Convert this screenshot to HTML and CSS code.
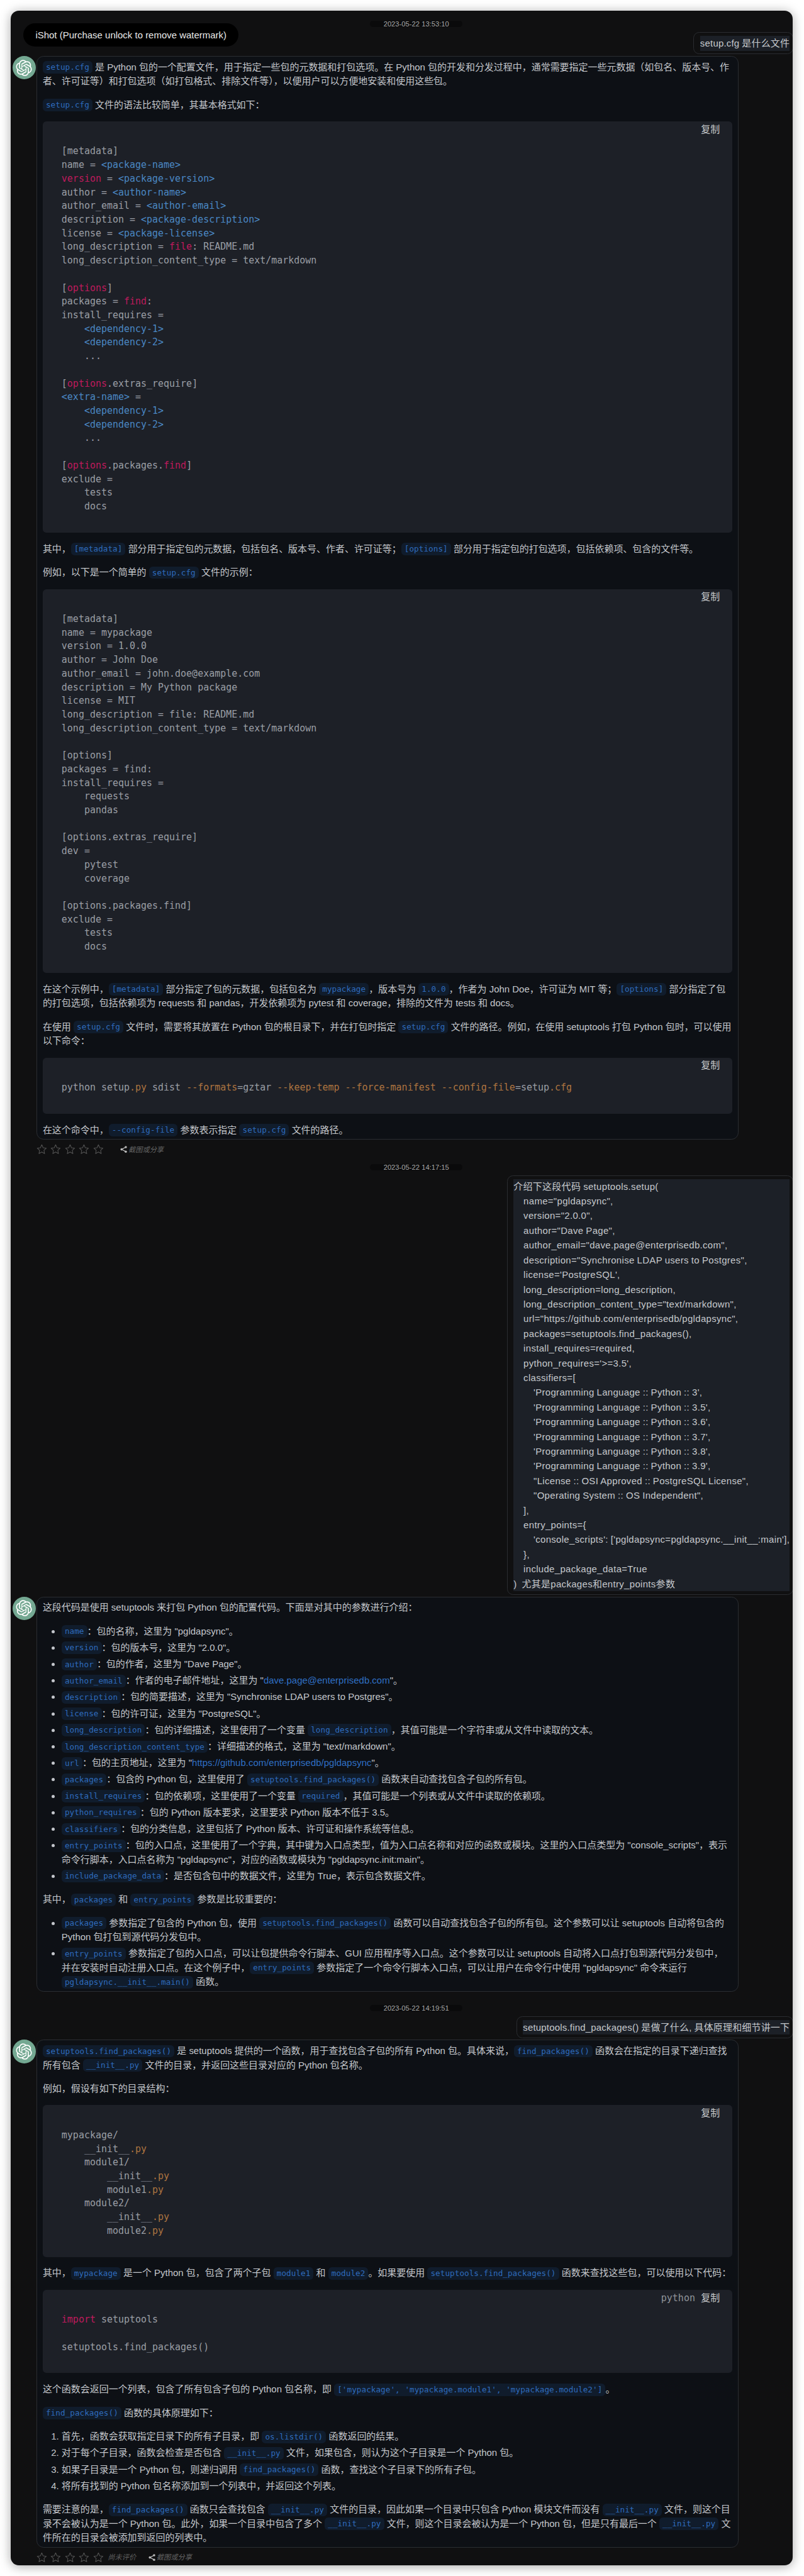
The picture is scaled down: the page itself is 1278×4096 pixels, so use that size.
FILE: index.html
```html
<!DOCTYPE html>
<html lang="zh-CN">
<head>
  <meta charset="UTF-8" />
  <title>ChatGPT conversation</title>
  <link rel="stylesheet" href="styles.css">
</head>
<body>
  <svg class="defs" width="0" height="0" aria-hidden="true">
    <symbol id="logo" viewBox="0 0 41 41">
      <path fill="currentColor" d="M37.5324 16.8707C37.9808 15.5241 38.1363 14.0974 37.9886 12.6859C37.8409 11.2744 37.3934 9.91076 36.676 8.68622C35.6126 6.83404 33.9882 5.3676 32.0373 4.4985C30.0864 3.62941 27.9098 3.40259 25.8215 3.85078C24.8796 2.7893 23.7219 1.94125 22.4257 1.36341C21.1295 0.785575 19.7249 0.491269 18.3058 0.500197C16.1708 0.495044 14.0893 1.16803 12.3614 2.42214C10.6335 3.67624 9.34853 5.44666 8.6917 7.47815C7.30085 7.76286 5.98686 8.3414 4.8377 9.17505C3.68854 10.0087 2.73073 11.0782 2.02839 12.312C0.956464 14.1591 0.498905 16.2988 0.721698 18.4228C0.944492 20.5467 1.83612 22.5449 3.268 24.1293C2.81966 25.4759 2.66413 26.9026 2.81182 28.3141C2.95951 29.7256 3.40701 31.0892 4.12437 32.3138C5.18791 34.1659 6.8123 35.6322 8.76321 36.5013C10.7141 37.3704 12.8907 37.5973 14.9789 37.1492C15.9208 38.2107 17.0786 39.0587 18.3747 39.6366C19.6709 40.2144 21.0755 40.5087 22.4946 40.4998C24.6307 40.5054 26.7133 39.8321 28.4418 38.5772C30.1704 37.3223 31.4556 35.5506 32.1119 33.5179C33.5027 33.2332 34.8167 32.6547 35.9659 31.821C37.115 30.9874 38.0728 29.9178 38.7752 28.684C39.8458 26.8371 40.3023 24.6979 40.0789 22.5748C39.8556 20.4517 38.9639 18.4544 37.5324 16.8707ZM22.4978 37.8849C20.7443 37.8874 19.0459 37.2733 17.6994 36.1501C17.7601 36.117 17.8666 36.0586 17.936 36.0161L25.9004 31.4156C26.1003 31.3019 26.2663 31.137 26.3813 30.9378C26.4964 30.7386 26.5563 30.5124 26.5549 30.2825V19.0542L29.9213 20.998C29.9389 21.0068 29.9541 21.0198 29.9656 21.0359C29.977 21.052 29.9842 21.0707 29.9867 21.0902V30.3889C29.9842 32.375 29.1946 34.2791 27.7909 35.6841C26.3872 37.0892 24.4838 37.8806 22.4978 37.8849ZM6.39227 31.0064C5.51397 29.4888 5.19742 27.7107 5.49804 25.9832C5.55718 26.0187 5.66048 26.0818 5.73461 26.1244L13.699 30.7248C13.8975 30.8408 14.1233 30.902 14.3532 30.902C14.583 30.902 14.8088 30.8408 15.0073 30.7248L24.731 25.1103V28.9979C24.7321 29.0177 24.7283 29.0376 24.7199 29.0556C24.7115 29.0736 24.6988 29.0893 24.6829 29.1012L16.6317 33.7497C14.9096 34.7416 12.8643 35.0097 10.9447 34.4954C9.02506 33.9811 7.38785 32.7263 6.39227 31.0064ZM4.29707 13.6194C5.17156 12.0998 6.55279 10.9364 8.19885 10.3327C8.19885 10.4013 8.19491 10.5228 8.19491 10.6071V19.808C8.19351 20.0378 8.25334 20.2638 8.36823 20.4629C8.48312 20.6619 8.64893 20.8267 8.84863 20.9404L18.5723 26.5542L15.206 28.4979C15.1894 28.5089 15.1703 28.5155 15.1505 28.5173C15.1307 28.5191 15.1107 28.516 15.0924 28.5082L7.04046 23.8557C5.32135 22.8601 4.06716 21.2235 3.55289 19.3046C3.03862 17.3858 3.30624 15.3413 4.29707 13.6194ZM31.955 20.0556L22.2312 14.4411L25.5976 12.4981C25.6142 12.4872 25.6333 12.4805 25.6531 12.4787C25.6729 12.4769 25.6928 12.4801 25.7111 12.4879L33.7631 17.1364C34.9967 17.849 36.0017 18.8982 36.6606 20.1613C37.3194 21.4244 37.6047 22.849 37.4832 24.2684C37.3617 25.6878 36.8382 27.0432 35.9743 28.1759C35.1103 29.3086 33.9415 30.1717 32.6047 30.6641C32.6047 30.5947 32.6047 30.4733 32.6047 30.3889V21.188C32.6066 20.9586 32.5474 20.7328 32.4332 20.5338C32.319 20.3348 32.154 20.1698 31.955 20.0556ZM35.3055 15.0128C35.2464 14.9765 35.1431 14.9142 35.069 14.8717L27.1045 10.2712C26.906 10.1554 26.6803 10.0943 26.4504 10.0943C26.2206 10.0943 25.9948 10.1554 25.7963 10.2712L16.0726 15.8858V11.9982C16.0715 11.9783 16.0753 11.9585 16.0837 11.9405C16.0921 11.9225 16.1048 11.9068 16.1207 11.8949L24.1719 7.25025C25.4053 6.53903 26.8158 6.19376 28.2383 6.25482C29.6608 6.31589 31.0364 6.78077 32.2044 7.59508C33.3723 8.40939 34.2842 9.53945 34.8334 10.8531C35.3826 12.1667 35.5464 13.6095 35.3055 15.0128ZM14.2424 21.9419L10.8752 19.9981C10.8576 19.9893 10.8423 19.9763 10.8309 19.9602C10.8195 19.9441 10.8122 19.9254 10.8098 19.9058V10.6071C10.8107 9.18295 11.2173 7.78848 11.9819 6.58696C12.7466 5.38544 13.8377 4.42659 15.1275 3.82264C16.4173 3.21869 17.8524 2.99464 19.2649 3.1767C20.6775 3.35876 22.0089 3.93941 23.1034 4.85067C23.0427 4.88379 22.937 4.94215 22.8668 4.98473L14.9024 9.58517C14.7025 9.69878 14.5366 9.86356 14.4215 10.0626C14.3065 10.2616 14.2466 10.4877 14.2479 10.7175L14.2424 21.9419ZM16.071 17.9991L20.4018 15.4978L24.7325 17.9975V22.9985L20.4018 25.4983L16.071 22.9985V17.9991Z"/>
    </symbol>
    <symbol id="star" viewBox="0 0 18 18">
      <path fill="none" stroke="currentColor" stroke-width="1.1" stroke-linejoin="round" d="M9 1.4l2.3 5.1 5.4.6-4 3.7 1.1 5.5L9 13.6l-4.8 2.7 1.1-5.5-4-3.7 5.4-.6z"/>
    </symbol>
    <symbol id="share" viewBox="0 0 12 12">
      <path fill="none" stroke="currentColor" stroke-width="1.3" d="M9.6 2.2L2.4 6l7.2 3.8"/>
      <circle cx="9.6" cy="2.2" r="1.9" fill="currentColor"/>
      <circle cx="2.4" cy="6" r="1.9" fill="currentColor"/>
      <circle cx="9.6" cy="9.8" r="1.9" fill="currentColor"/>
    </symbol>
  </svg>

  <div class="window">
    <div class="watermark">iShot (Purchase unlock to remove watermark)</div>

    <div class="time"><span>2023-05-22 13:53:10</span></div>
    <div class="user"><div class="user-box"><div class="user-text">setup.cfg 是什么文件</div></div></div>

    <div class="answer">
      <div class="avatar"><svg><use href="#logo"/></svg></div>
      <div class="bubble">
        <p><code>setup.cfg</code> 是 Python 包的一个配置文件，用于指定一些包的元数据和打包选项。在 Python 包的开发和分发过程中，通常需要指定一些元数据（如包名、版本号、作者、许可证等）和打包选项（如打包格式、排除文件等），以便用户可以方便地安装和使用这些包。</p>
        <p><code>setup.cfg</code> 文件的语法比较简单，其基本格式如下：</p>
        <div class="code">
          <div class="code-head"><span class="copy">复制</span></div>
<pre>[metadata]
name = <b>&lt;package-name&gt;</b>
<i>version</i> = <b>&lt;package-version&gt;</b>
author = <b>&lt;author-name&gt;</b>
author_email = <b>&lt;author-email&gt;</b>
description = <b>&lt;package-description&gt;</b>
license = <b>&lt;package-license&gt;</b>
long_description = <i>file</i>: README.md
long_description_content_type = text/markdown

[<i>options</i>]
packages = <i>find</i>:
install_requires =
    <b>&lt;dependency-1&gt;</b>
    <b>&lt;dependency-2&gt;</b>
    ...

[<i>options</i>.extras_require]
<b>&lt;extra-name&gt;</b> =
    <b>&lt;dependency-1&gt;</b>
    <b>&lt;dependency-2&gt;</b>
    ...

[<i>options</i>.packages.<i>find</i>]
exclude =
    tests
    docs</pre>
        </div>
        <p>其中，<code>[metadata]</code> 部分用于指定包的元数据，包括包名、版本号、作者、许可证等；<code>[options]</code> 部分用于指定包的打包选项，包括依赖项、包含的文件等。</p>
        <p>例如，以下是一个简单的 <code>setup.cfg</code> 文件的示例：</p>
        <div class="code">
          <div class="code-head"><span class="copy">复制</span></div>
<pre>[metadata]
name = mypackage
version = 1.0.0
author = John Doe
author_email = john.doe@example.com
description = My Python package
license = MIT
long_description = file: README.md
long_description_content_type = text/markdown

[options]
packages = find:
install_requires =
    requests
    pandas

[options.extras_require]
dev =
    pytest
    coverage

[options.packages.find]
exclude =
    tests
    docs</pre>
        </div>
        <p>在这个示例中，<code>[metadata]</code> 部分指定了包的元数据，包括包名为 <code>mypackage</code>，版本号为 <code>1.0.0</code>，作者为 John Doe，许可证为 MIT 等；<code>[options]</code> 部分指定了包的打包选项，包括依赖项为 requests 和 pandas，开发依赖项为 pytest 和 coverage，排除的文件为 tests 和 docs。</p>
        <p>在使用 <code>setup.cfg</code> 文件时，需要将其放置在 Python 包的根目录下，并在打包时指定 <code>setup.cfg</code> 文件的路径。例如，在使用 setuptools 打包 Python 包时，可以使用以下命令：</p>
        <div class="code">
          <div class="code-head"><span class="copy">复制</span></div>
<pre>python setup<u>.py</u> sdist <u>--formats</u>=gztar <u>--keep-temp</u> <u>--force-manifest</u> <u>--config-file</u>=setup<u>.cfg</u></pre>
        </div>
        <p>在这个命令中，<code>--config-file</code> 参数表示指定 <code>setup.cfg</code> 文件的路径。</p>
      </div>
    </div>
    <div class="actions">
      <div class="stars">
        <svg><use href="#star"/></svg>
        <svg><use href="#star"/></svg>
        <svg><use href="#star"/></svg>
        <svg><use href="#star"/></svg>
        <svg><use href="#star"/></svg>
      </div>
      <span class="rating"></span>
      <span class="share"><svg><use href="#share"/></svg>截图或分享</span>
    </div>

    <div class="time"><span>2023-05-22 14:17:15</span></div>
    <div class="user"><div class="user-box"><div class="user-text user-long">介绍下这段代码 setuptools.setup(
    name="pgldapsync",
    version="2.0.0",
    author="Dave Page",
    author_email="dave.page@enterprisedb.com",
    description="Synchronise LDAP users to Postgres",
    license='PostgreSQL',
    long_description=long_description,
    long_description_content_type="text/markdown",
    url="https://github.com/enterprisedb/pgldapsync",
    packages=setuptools.find_packages(),
    install_requires=required,
    python_requires='&gt;=3.5',
    classifiers=[
        'Programming Language :: Python :: 3',
        'Programming Language :: Python :: 3.5',
        'Programming Language :: Python :: 3.6',
        'Programming Language :: Python :: 3.7',
        'Programming Language :: Python :: 3.8',
        'Programming Language :: Python :: 3.9',
        "License :: OSI Approved :: PostgreSQL License",
        "Operating System :: OS Independent",
    ],
    entry_points={
        'console_scripts': ['pgldapsync=pgldapsync.__init__:main'],
    },
    include_package_data=True
)  尤其是packages和entry_points参数</div></div></div>

    <div class="answer answer-plain">
      <div class="avatar"><svg><use href="#logo"/></svg></div>
      <div class="bubble">
        <p>这段代码是使用 setuptools 来打包 Python 包的配置代码。下面是对其中的参数进行介绍：</p>
        <ul>
          <li><code>name</code>：包的名称，这里为 "pgldapsync"。</li>
          <li><code>version</code>：包的版本号，这里为 "2.0.0"。</li>
          <li><code>author</code>：包的作者，这里为 "Dave Page"。</li>
          <li><code>author_email</code>：作者的电子邮件地址，这里为 "<a href="#">dave.page@enterprisedb.com</a>"。</li>
          <li><code>description</code>：包的简要描述，这里为 "Synchronise LDAP users to Postgres"。</li>
          <li><code>license</code>：包的许可证，这里为 "PostgreSQL"。</li>
          <li><code>long_description</code>：包的详细描述，这里使用了一个变量 <code>long_description</code>，其值可能是一个字符串或从文件中读取的文本。</li>
          <li><code>long_description_content_type</code>：详细描述的格式，这里为 "text/markdown"。</li>
          <li><code>url</code>：包的主页地址，这里为 "<a href="#">https://github.com/enterprisedb/pgldapsync</a>"。</li>
          <li><code>packages</code>：包含的 Python 包，这里使用了 <code>setuptools.find_packages()</code> 函数来自动查找包含子包的所有包。</li>
          <li><code>install_requires</code>：包的依赖项，这里使用了一个变量 <code>required</code>，其值可能是一个列表或从文件中读取的依赖项。</li>
          <li><code>python_requires</code>：包的 Python 版本要求，这里要求 Python 版本不低于 3.5。</li>
          <li><code>classifiers</code>：包的分类信息，这里包括了 Python 版本、许可证和操作系统等信息。</li>
          <li><code>entry_points</code>：包的入口点，这里使用了一个字典，其中键为入口点类型，值为入口点名称和对应的函数或模块。这里的入口点类型为 "console_scripts"，表示命令行脚本，入口点名称为 "pgldapsync"，对应的函数或模块为 "pgldapsync.init:main"。</li>
          <li><code>include_package_data</code>：是否包含包中的数据文件，这里为 True，表示包含数据文件。</li>
        </ul>
        <p>其中，<code>packages</code> 和 <code>entry_points</code> 参数是比较重要的：</p>
        <ul>
          <li><code>packages</code> 参数指定了包含的 Python 包，使用 <code>setuptools.find_packages()</code> 函数可以自动查找包含子包的所有包。这个参数可以让 setuptools 自动将包含的 Python 包打包到源代码分发包中。</li>
          <li><code>entry_points</code> 参数指定了包的入口点，可以让包提供命令行脚本、GUI 应用程序等入口点。这个参数可以让 setuptools 自动将入口点打包到源代码分发包中，并在安装时自动注册入口点。在这个例子中，<code>entry_points</code> 参数指定了一个命令行脚本入口点，可以让用户在命令行中使用 "pgldapsync" 命令来运行 <code>pgldapsync.__init__.main()</code> 函数。</li>
        </ul>
      </div>
    </div>

    <div class="time"><span>2023-05-22 14:19:51</span></div>
    <div class="user"><div class="user-box"><div class="user-text">setuptools.find_packages() 是做了什么, 具体原理和细节讲一下</div></div></div>

    <div class="answer">
      <div class="avatar"><svg><use href="#logo"/></svg></div>
      <div class="bubble">
        <p><code>setuptools.find_packages()</code> 是 setuptools 提供的一个函数，用于查找包含子包的所有 Python 包。具体来说，<code>find_packages()</code> 函数会在指定的目录下递归查找所有包含 <code>__init__.py</code> 文件的目录，并返回这些目录对应的 Python 包名称。</p>
        <p>例如，假设有如下的目录结构：</p>
        <div class="code">
          <div class="code-head"><span class="copy">复制</span></div>
<pre>mypackage/
    __init__<u>.py</u>
    module1/
        __init__<u>.py</u>
        module1<u>.py</u>
    module2/
        __init__<u>.py</u>
        module2<u>.py</u></pre>
        </div>
        <p>其中，<code>mypackage</code> 是一个 Python 包，包含了两个子包 <code>module1</code> 和 <code>module2</code>。如果要使用 <code>setuptools.find_packages()</code> 函数来查找这些包，可以使用以下代码：</p>
        <div class="code">
          <div class="code-head"><span class="lang">python</span><span class="copy">复制</span></div>
<pre><i>import</i> setuptools

setuptools.find_packages()</pre>
        </div>
        <p>这个函数会返回一个列表，包含了所有包含子包的 Python 包名称，即 <code>['mypackage', 'mypackage.module1', 'mypackage.module2']</code>。</p>
        <p><code>find_packages()</code> 函数的具体原理如下：</p>
        <ol>
          <li>首先，函数会获取指定目录下的所有子目录，即 <code>os.listdir()</code> 函数返回的结果。</li>
          <li>对于每个子目录，函数会检查是否包含 <code>__init__.py</code> 文件，如果包含，则认为这个子目录是一个 Python 包。</li>
          <li>如果子目录是一个 Python 包，则递归调用 <code>find_packages()</code> 函数，查找这个子目录下的所有子包。</li>
          <li>将所有找到的 Python 包名称添加到一个列表中，并返回这个列表。</li>
        </ol>
        <p>需要注意的是，<code>find_packages()</code> 函数只会查找包含 <code>__init__.py</code> 文件的目录，因此如果一个目录中只包含 Python 模块文件而没有 <code>__init__.py</code> 文件，则这个目录不会被认为是一个 Python 包。此外，如果一个目录中包含了多个 <code>__init__.py</code> 文件，则这个目录会被认为是一个 Python 包，但是只有最后一个 <code>__init__.py</code> 文件所在的目录会被添加到返回的列表中。</p>
      </div>
    </div>
    <div class="actions">
      <div class="stars">
        <svg><use href="#star"/></svg>
        <svg><use href="#star"/></svg>
        <svg><use href="#star"/></svg>
        <svg><use href="#star"/></svg>
        <svg><use href="#star"/></svg>
      </div>
      <span class="rating">尚未评价</span>
      <span class="share"><svg><use href="#share"/></svg>截图或分享</span>
    </div>
  </div>
</body>
</html>
```

FILE: styles.css
```css
body {
  margin: 0;
  padding: 16.85px 0 17.8px;
  background: #fff;
  font-family: "Liberation Sans", "Noto Sans CJK SC", sans-serif;
  font-size: 14.976px;
  line-height: 22.464px;
  color: #c4c7cc;
}

.defs {
  position: absolute;
}

.window {
  position: relative;
  width: 1243px;
  margin-left: 16.85px;
  padding: 1.87px 0 3.74px;
  overflow: hidden;
  background: #101011;
  border-radius: 13px;
  box-shadow: 0 2px 17px rgba(0, 0, 0, 0.35);
}

.watermark {
  position: absolute;
  top: 19.66px;
  left: 20.6px;
  width: 341.6px;
  height: 37.44px;
  line-height: 37.44px;
  text-align: center;
  background: #000;
  border-radius: 18.7px;
  color: #e8e8e8;
}

.time {
  display: flex;
  justify-content: center;
  align-items: center;
  height: 14.98px;
  margin: 12.17px 0 5.62px;
  padding-left: 46.8px;
  font-size: 11.232px;
  color: #a8a8a8;
}

.time span {
  width: 147px;
  height: 10.3px;
  line-height: 10.3px;
  text-align: center;
  background: #0a0a0b;
  border-radius: 5.6px;
}

.user {
  display: flex;
  justify-content: flex-end;
  margin-bottom: 2.81px;
}

.user-box {
  margin-right: -1px;
  padding: 4.68px 4.68px 4.68px 9.36px;
  border: 1px solid #2a2c30;
  border-radius: 9.4px;
}

.user-text {
  background: #1c2027;
  color: #c6c9cd;
  line-height: 23.4px;
  letter-spacing: 0.2px;
  word-spacing: -0.4px;
  white-space: pre;
}

.user-long {
  letter-spacing: 0.32px;
  word-spacing: -0.5px;
}

.answer {
  display: flex;
  gap: 0.94px;
  padding-left: 2.81px;
  margin-right: 86.1px;
}

.answer-plain {
  margin-bottom: 18.72px;
}

.avatar {
  flex: none;
  display: flex;
  align-items: center;
  justify-content: center;
  width: 37.44px;
  height: 37.44px;
  border-radius: 50%;
  background: #74a892;
  color: #fff;
}

.avatar svg {
  width: 26.2px;
  height: 26.2px;
}

.bubble {
  flex: 1;
  min-width: 0;
  padding: 5.62px 8.9px 2.81px;
  background: #0d1015;
  border: 1px solid #2a2d32;
  border-radius: 11.2px;
}

.bubble p {
  margin: 0 0 14.98px;
}

.bubble > :last-child {
  margin-bottom: 0;
}

.bubble ul,
.bubble ol {
  margin: 0 0 14.98px;
  padding-left: 29.95px;
}

.bubble li + li {
  margin-top: 3.74px;
}

.bubble a {
  color: #2f6fc4;
  text-decoration: none;
}

code {
  padding: 2.4px 5.05px;
  font-family: "DejaVu Sans Mono", monospace;
  font-size: 12.73px;
  line-height: 1;
  color: #2e6bbd;
  background: #101c2c;
  border-radius: 5.6px;
}

.code {
  margin-bottom: 14.98px;
  background: #1d2027;
  border-radius: 5.6px;
}

.code-head {
  display: flex;
  justify-content: flex-end;
  align-items: center;
  gap: 9.36px;
  height: 26.2px;
  margin-bottom: 11.23px;
  padding-right: 19.66px;
}

.copy {
  color: #c8cacd;
}

.lang {
  font-family: "DejaVu Sans Mono", monospace;
  color: #8f9399;
}

pre {
  margin: 0;
  padding: 0 29.95px 29.95px;
  font-family: "DejaVu Sans Mono", monospace;
  font-size: 14.976px;
  line-height: 21.715px;
  color: #9a9ea5;
}

pre b {
  font-weight: normal;
  color: #4a87c4;
}

pre i {
  font-style: normal;
  color: #bf1a5c;
}

pre u {
  text-decoration: none;
  color: #ad7440;
}

.actions {
  display: flex;
  align-items: center;
  height: 16.85px;
  margin-top: 7.49px;
  padding-left: 41.2px;
}

.stars {
  display: flex;
  gap: 5.62px;
  color: #555;
}

.stars svg {
  width: 16.85px;
  height: 16.85px;
}

.rating {
  margin-left: 6.55px;
  font-size: 11.232px;
  font-style: italic;
  color: #5c5c5c;
}

.share {
  display: flex;
  align-items: center;
  gap: 1.87px;
  margin-left: 19.66px;
  font-size: 11.232px;
  font-style: italic;
  color: #666;
}

.share svg {
  width: 11.23px;
  height: 11.23px;
  color: #bbb;
}
```
